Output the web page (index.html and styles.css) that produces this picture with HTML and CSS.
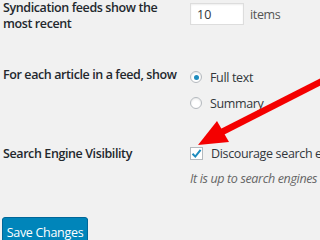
FILE: index.html
```html
<!DOCTYPE html>
<html lang="en">
<head>
  <meta charset="UTF-8" />
  <title>Reading Settings</title>
  <link rel="stylesheet" href="styles.css">
</head>
<body>
  <form class="settings">
    <div class="row row-feeds">
      <div class="label">Syndication feeds show the <span class="nowrap">most recent</span></div>
      <div class="field field-inline">
        <input type="text" class="small-text" value="10" />
        <span class="unit">items</span>
      </div>
    </div>

    <div class="row row-article">
      <div class="label">For each article in a feed, show</div>
      <div class="field">
        <label class="option">
          <span class="radio checked"></span>
          Full text
        </label>
        <label class="option">
          <span class="radio"></span>
          Summary
        </label>
      </div>
    </div>

    <div class="row row-visibility">
      <div class="label">Search Engine Visibility</div>
      <div class="field">
        <label class="option">
          <span class="checkbox">
            <svg width="11" height="11" viewBox="0 0 11 11"><path d="M1.5 5.8 L4.3 8.6 L9.6 1.8" fill="none" stroke="#1e8cbe" stroke-width="2"/></svg>
          </span>
          Discourage search engines from indexing this site
        </label>
        <p class="description">It is up to search engines to honor this request.</p>
      </div>
    </div>

    <button type="button" class="button-primary">Save Changes</button>
  </form>

  <!-- red annotation arrow -->
  <svg class="annotation" width="320" height="240" viewBox="0 0 320 240">
    <line x1="324" y1="80" x2="220" y2="133" stroke="#f40000" stroke-width="6.5" />
    <polygon points="198,145 217,121 229,142" fill="#f40000" />
  </svg>
</body>
</html>
```

FILE: styles.css
```css
* {
  margin: 0;
  padding: 0;
  box-sizing: border-box;
}

body {
  font-family: 'Open Sans', sans-serif;
  font-size: 12.5px;
  letter-spacing: -0.35px;
  background-color: #f1f1f1;
  color: #23282d;
  width: 320px;
  height: 240px;
  overflow: hidden;
  position: relative;
}

.settings {
  padding-left: 3px;
  width: 600px;
}

.row {
  display: grid;
  grid-template-columns: 187px 1fr;
}

.label {
  font-weight: 600;
  line-height: 15.5px;
  width: 184px;
  letter-spacing: -0.4px;
}

.nowrap {
  white-space: nowrap;
}

.row-feeds {
  height: 67px;
}

.row-article {
  height: 79px;
}

.row-visibility {
  height: 71px;
}

.field-inline {
  display: flex;
  align-items: center;
  height: 28px;
  gap: 6px;
}

.small-text {
  width: 54px;
  height: 22px;
  border: 1px solid #ddd;
  background: white;
  font-family: inherit;
  font-size: 12.5px;
  color: #32373c;
  padding: 0 6px;
  box-shadow: inset 0 1px 2px rgba(0, 0, 0, 0.07);
  outline: none;
}

.unit {
  color: #555;
}

.option {
  display: flex;
  align-items: center;
  gap: 8px;
  height: 26px;
  color: #32373c;
  white-space: nowrap;
}

.row-article .field {
  margin-top: -3px;
}

.row-visibility .field {
  margin-top: -6px;
}

.radio {
  width: 12px;
  height: 12px;
  border: 1px solid #b4b9be;
  border-radius: 50%;
  background: white;
  display: flex;
  align-items: center;
  justify-content: center;
  box-shadow: inset 0 1px 2px rgba(0, 0, 0, 0.1);
}

.radio.checked::before {
  content: "";
  width: 5px;
  height: 5px;
  border-radius: 50%;
  background: #1e8cbe;
}

.checkbox {
  width: 13px;
  height: 13px;
  border: 1px solid #b4b9be;
  background: white;
  display: flex;
  align-items: center;
  justify-content: center;
}

.description {
  font-style: italic;
  color: #666;
  margin-top: 4px;
  white-space: nowrap;
}

.button-primary {
  margin-left: -1px;
  width: 86px;
  height: 30px;
  background-color: #0085ba;
  border: 1px solid #006799;
  border-radius: 3px;
  color: white;
  font-family: inherit;
  font-size: 12.5px;
  letter-spacing: -0.3px;
  white-space: nowrap;
  box-shadow: 0 1px 0 #006799;
}

.annotation {
  position: absolute;
  top: 0;
  left: 0;
  pointer-events: none;
}
```
